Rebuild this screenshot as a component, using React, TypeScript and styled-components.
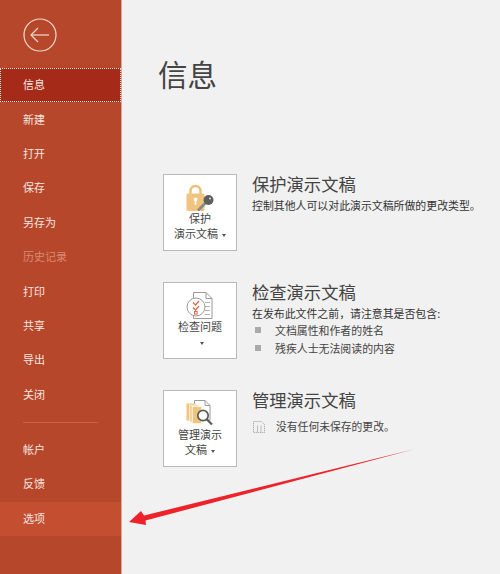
import React from "react";
import styled, { createGlobalStyle } from "styled-components";

const Global = createGlobalStyle`
  html, body { margin: 0; padding: 0; background: #f1f1f1; }
  body { font-family: "Noto Sans CJK SC", "Noto Sans", sans-serif; }
`;

const Page = styled.div`
  position: relative;
  width: 500px;
  height: 574px;
  display: flex;
  overflow: hidden;
  background: #f1f1f1;
`;

const Sidebar = styled.nav`
  width: 121px;
  height: 574px;
  flex: none;
  background: #b7472a;
  border-right: 1px solid #d9a99b;
  display: flex;
  flex-direction: column;
`;

const BackSlot = styled.div`
  height: 68px;
  padding: 18px 0 0 23px;
  box-sizing: border-box;
`;

const NavItem = styled.div<{ $active?: boolean; $hover?: boolean; $disabled?: boolean }>`
  height: 34.4px;
  box-sizing: border-box;
  flex: none;
  display: flex;
  align-items: center;
  padding: 0 0 2px 23px;
  font-size: 11px;
  color: ${(p) => (p.$disabled ? "#d98a72" : "#f6e6e0")};
  background: ${(p) => (p.$active ? "#a52a17" : p.$hover ? "#c44e30" : "transparent")};
  outline: ${(p) => (p.$active ? "1px dotted #e8e0dc" : "none")};
  outline-offset: -1px;
`;

const Divider = styled.div`
  height: 1px;
  width: 75px;
  margin: 10px 0 10px 23px;
  flex: none;
  background: #ca6346;
`;

const Main = styled.main`
  flex: 1;
  padding: 0 0 0 36px;
  min-width: 0;
`;

const Title = styled.h1`
  margin: 50px 0 0;
  height: 46px;
  font-size: 29.5px;
  line-height: 46px;
  font-weight: 400;
  color: #444;
`;

const Sections = styled.div`
  margin: 78px 0 0 5px;
  display: flex;
  flex-direction: column;
  gap: 31px;
`;

const Section = styled.section`
  display: flex;
  gap: 15px;
  height: 77px;
`;

const ActionButton = styled.div`
  width: 74px;
  height: 77px;
  box-sizing: border-box;
  flex: none;
  background: #fff;
  border: 1px solid #b8b8b8;
  display: flex;
  flex-direction: column;
  align-items: center;
  padding-top: 9px;
`;

const IconBox = styled.div`
  height: 27px;
  display: flex;
  align-items: center;
  justify-content: center;
  flex: none;
`;

const ButtonLabel = styled.div`
  font-size: 11px;
  line-height: 15px;
  color: #444;
  text-align: center;
`;

const Caret = styled.span`
  display: inline-block;
  width: 0;
  height: 0;
  margin-left: 4px;
  vertical-align: middle;
  border-left: 2.5px solid transparent;
  border-right: 2.5px solid transparent;
  border-top: 3px solid #555;
`;

const Info = styled.div`
  min-width: 0;
  margin-top: -2px;
`;

const SectionTitle = styled.h2`
  margin: 0;
  font-size: 17.3px;
  line-height: 24px;
  font-weight: 400;
  color: #444;
  white-space: nowrap;
`;

const Desc = styled.p`
  margin: 1px 0 0;
  font-size: 10.9px;
  line-height: 16px;
  color: #333;
  white-space: nowrap;
`;

const List = styled.ul`
  margin: 0;
  padding: 0;
  list-style: none;
`;

const ListItem = styled.li`
  display: flex;
  align-items: center;
  height: 18px;
  font-size: 10.9px;
  color: #444;
  white-space: nowrap;
  &::before {
    content: "";
    width: 6px;
    height: 6px;
    margin: 0 14px 0 3px;
    background: #aaa;
    flex: none;
  }
`;

const StatusRow = styled.div`
  display: flex;
  align-items: center;
  gap: 10px;
  margin-top: 6px;
  font-size: 10.8px;
  color: #444;
  white-space: nowrap;
`;

const ArrowLayer = styled.svg`
  position: absolute;
  left: 0;
  top: 0;
  pointer-events: none;
`;

const Back = () => (
  <svg width="34" height="34" viewBox="0 0 34 34" fill="none" stroke="#f3dcd4" strokeWidth="1.2">
    <circle cx="17" cy="17" r="16" />
    <path d="M8 17H26" />
    <path d="M15 10L8 17L15 24" />
  </svg>
);

const LockIcon = () => (
  <svg width="28" height="27" viewBox="0 0 28 27">
    <path d="M4.5 10V7a5 5 0 0 1 10 0v3" fill="none" stroke="#edc078" strokeWidth="2.4" />
    <rect x="0.5" y="9.5" width="18" height="17.5" rx="1.5" fill="#f0c47f" />
    <circle cx="9.5" cy="15.5" r="1.9" fill="#fff" />
    <rect x="8.7" y="15.5" width="1.6" height="5.5" fill="#fff" />
    <path d="M12 26.5L20 18.5" stroke="#8a8a8a" strokeWidth="2.8" />
    <circle cx="22.5" cy="16" r="5" fill="#5f5f5f" />
    <circle cx="24" cy="14.5" r="1" fill="#ddd" />
  </svg>
);

const CheckIcon = () => (
  <svg width="28" height="27" viewBox="0 0 28 27" fill="none">
    <path d="M7.5 0.5H20L26 6.5V26.5H7.5Z" fill="#fff" stroke="#9a9a9a" />
    <path d="M20 0.5V6.5H26" stroke="#9a9a9a" />
    <path d="M19 10.5H24M19 14.5H24M19 18.5H24M19 22.5H24" stroke="#b5b5b5" />
    <circle cx="10" cy="15" r="9" fill="#fff" stroke="#9a9a9a" />
    <path d="M7 10.5L9.5 13L13 9M7 15.5L9.5 18L13 14" stroke="#e0684a" strokeWidth="1.2" />
    <rect x="8.5" y="19.5" width="2.6" height="2.6" stroke="#e0684a" />
  </svg>
);

const ManageIcon = () => (
  <svg width="28" height="27" viewBox="0 0 28 27" fill="none">
    <path d="M8.5 0.5H19L24 5.5V20H8.5Z" fill="#fff" stroke="#9a9a9a" />
    <path d="M19 0.5V5.5H24" stroke="#9a9a9a" />
    <rect x="0.5" y="3.5" width="9" height="17" fill="#f0c47f" />
    <rect x="3.5" y="5" width="9" height="17" fill="#f4d39c" stroke="#fff" strokeWidth=".6" />
    <rect x="6.5" y="6.5" width="9" height="17" fill="#f0c47f" stroke="#fff" strokeWidth=".6" />
    <circle cx="17" cy="15.5" r="5.2" fill="#fff" stroke="#5a5a5a" strokeWidth="1.7" />
    <path d="M21 19.5L26 24.5" stroke="#5a5a5a" strokeWidth="2.2" />
  </svg>
);

const SmallDoc = () => (
  <svg width="14" height="14" viewBox="0 0 14 14" fill="none" stroke="#999" strokeDasharray="1 1">
    <path d="M1.5 2.5H9.5L12.5 5.5V13.5H1.5Z" />
    <path d="M5.5 6.5V13M9 6.5V13" strokeDasharray="none" stroke="#bbb" />
  </svg>
);

const top = ["新建", "打开", "保存", "另存为"];
const mid = ["打印", "共享", "导出", "关闭"];

export default function App() {
  return (
    <Page>
      <Global />
      <Sidebar>
        <BackSlot>
          <Back />
        </BackSlot>
        <NavItem $active>信息</NavItem>
        {top.map((t) => (
          <NavItem key={t}>{t}</NavItem>
        ))}
        <NavItem $disabled>历史记录</NavItem>
        {mid.map((t) => (
          <NavItem key={t}>{t}</NavItem>
        ))}
        <Divider />
        <NavItem>帐户</NavItem>
        <NavItem>反馈</NavItem>
        <NavItem $hover>选项</NavItem>
      </Sidebar>
      <Main>
        <Title>信息</Title>
        <Sections>
          <Section>
            <ActionButton>
              <IconBox><LockIcon /></IconBox>
              <ButtonLabel>保护<br />演示文稿<Caret /></ButtonLabel>
            </ActionButton>
            <Info>
              <SectionTitle>保护演示文稿</SectionTitle>
              <Desc>控制其他人可以对此演示文稿所做的更改类型。</Desc>
            </Info>
          </Section>
          <Section>
            <ActionButton>
              <IconBox><CheckIcon /></IconBox>
              <ButtonLabel>检查问题<br /><Caret /></ButtonLabel>
            </ActionButton>
            <Info>
              <SectionTitle>检查演示文稿</SectionTitle>
              <Desc>在发布此文件之前，请注意其是否包含:</Desc>
              <List>
                <ListItem>文档属性和作者的姓名</ListItem>
                <ListItem>残疾人士无法阅读的内容</ListItem>
              </List>
            </Info>
          </Section>
          <Section>
            <ActionButton>
              <IconBox><ManageIcon /></IconBox>
              <ButtonLabel>管理演示<br />文稿<Caret /></ButtonLabel>
            </ActionButton>
            <Info>
              <SectionTitle>管理演示文稿</SectionTitle>
              <StatusRow><SmallDoc />没有任何未保存的更改。</StatusRow>
            </Info>
          </Section>
        </Sections>
      </Main>
      <ArrowLayer width="500" height="574" viewBox="0 0 500 574">
        <path d="M415 449L144 515.5L141 511L129 522L146 525L145.5 520.5Z" fill="#ee2229" />
      </ArrowLayer>
    </Page>
  );
}
